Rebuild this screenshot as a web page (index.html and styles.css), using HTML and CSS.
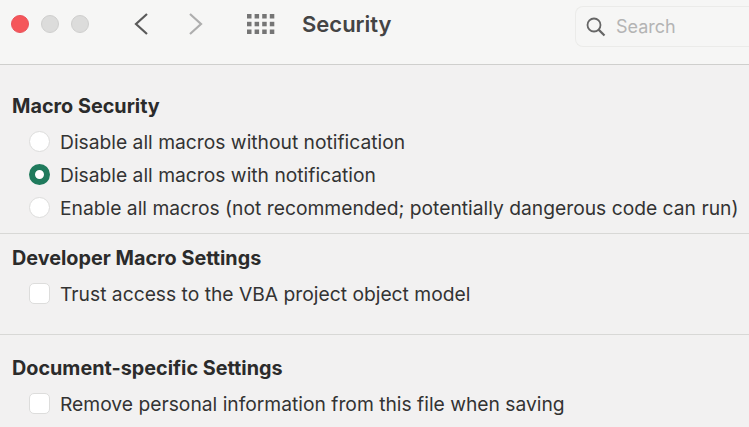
FILE: index.html
```html
<!DOCTYPE html>
<html lang="en">
<head>
    <meta charset="UTF-8">
    <title>Security</title>
    <link rel="stylesheet" href="styles.css">
</head>
<body>
    <div class="toolbar">
        <div class="lights">
            <span class="light red"></span>
            <span class="light"></span>
            <span class="light"></span>
        </div>
        <svg class="nav-icon" width="18" height="26" viewBox="0 0 18 26"><path d="M15 3 L4 13 L15 23" fill="none" stroke="#5a5a5a" stroke-width="2.2"/></svg>
        <svg class="nav-icon next" width="18" height="26" viewBox="0 0 18 26"><path d="M3 3 L14 13 L3 23" fill="none" stroke="#aeaeae" stroke-width="2.2"/></svg>
        <svg class="grid-icon" width="28" height="20" viewBox="0 0 28 20" fill="#757575">
            <rect x="0" y="0" width="4.5" height="4.5"/><rect x="7.6" y="0" width="4.5" height="4.5"/><rect x="15.2" y="0" width="4.5" height="4.5"/><rect x="22.8" y="0" width="4.5" height="4.5"/>
            <rect x="0" y="7.8" width="4.5" height="4.5"/><rect x="7.6" y="7.8" width="4.5" height="4.5"/><rect x="15.2" y="7.8" width="4.5" height="4.5"/><rect x="22.8" y="7.8" width="4.5" height="4.5"/>
            <rect x="0" y="15.5" width="4.5" height="4.5"/><rect x="7.6" y="15.5" width="4.5" height="4.5"/><rect x="15.2" y="15.5" width="4.5" height="4.5"/><rect x="22.8" y="15.5" width="4.5" height="4.5"/>
        </svg>
        <div class="title">Security</div>
        <div class="search">
            <svg width="20" height="20" viewBox="0 0 20 20"><circle cx="8" cy="8" r="6.5" fill="none" stroke="#666" stroke-width="1.8"/><path d="M12.6 12.6 L18.5 18.5" stroke="#666" stroke-width="2.2"/></svg>
            <span>Search</span>
        </div>
    </div>

    <div class="section first">
        <h3>Macro Security</h3>
        <div class="option"><span class="radio"></span>Disable all macros without notification</div>
        <div class="option"><span class="radio checked"></span>Disable all macros with notification</div>
        <div class="option"><span class="radio"></span>Enable all macros (not recommended; potentially dangerous code can run)</div>
    </div>
    <div class="section second">
        <h3>Developer Macro Settings</h3>
        <div class="option"><span class="check"></span>Trust access to the VBA project object model</div>
    </div>
    <div class="section last">
        <h3>Document-specific Settings</h3>
        <div class="option"><span class="check"></span>Remove personal information from this file when saving</div>
    </div>
</body>
</html>
```
FILE: styles.css
```css
html {
    background-color: #f2f1f1;
}

body {
    margin: 0;
    height: 427px;
    overflow: hidden;
    font-family: "Inter", "Liberation Sans", sans-serif;
    color: #2b2b2b;
}

.toolbar {
    display: flex;
    align-items: center;
    height: 65px;
    padding: 0 0 17px 11px;
    box-sizing: border-box;
    background-color: #f6f6f5;
    border-bottom: 1px solid #cfcfcd;
}

.lights {
    display: flex;
    gap: 12px;
    margin-right: 43px;
}

.light {
    width: 18px;
    height: 18px;
    border-radius: 50%;
    box-sizing: border-box;
    background-color: #dcdcdb;
    border: 1px solid #cfcfce;
}

.light.red {
    background-color: #f5565a;
    border-color: #e9525a;
}

.nav-icon.next {
    margin-left: 37px;
}

.grid-icon {
    margin-left: 42px;
}

.title {
    margin-left: 27px;
    font-size: 22px;
    font-weight: 600;
    color: #444;
}

.search {
    display: flex;
    align-items: center;
    gap: 10px;
    margin-left: auto;
    width: 174px;
    height: 41px;
    margin-top: 6px;
    padding-left: 10px;
    box-sizing: border-box;
    border: 1px solid #ebebe9;
    border-right: 0;
    border-radius: 8px 0 0 8px;
    font-size: 18px;
    color: #b4b4b4;
}

.section {
    padding: 0 0 0 12px;
    border-bottom: 1px solid #d8d8d6;
}

.section.first {
    padding-top: 28px;
    height: 169px;
    box-sizing: border-box;
}

.section.second {
    padding-top: 11px;
    height: 101px;
    box-sizing: border-box;
}

.section.last {
    padding-top: 20px;
    border-bottom: 0;
}

h3 {
    margin: 0 0 6px;
    height: 26px;
    line-height: 26px;
    font-size: 19.8px;
    font-weight: 700;
}

.option {
    display: flex;
    align-items: center;
    height: 33px;
    font-size: 19.25px;
    white-space: nowrap;
    color: #333;
}

.radio,
.check {
    flex: none;
    width: 21px;
    height: 21px;
    margin: 0 10px 0 17px;
    box-sizing: border-box;
    background-color: #fff;
    border: 1px solid #dddddc;
}

.radio {
    border-radius: 50%;
}

.check {
    border-radius: 5px;
}

.radio.checked {
    border: 6px solid #1f7a5c;
}
```
